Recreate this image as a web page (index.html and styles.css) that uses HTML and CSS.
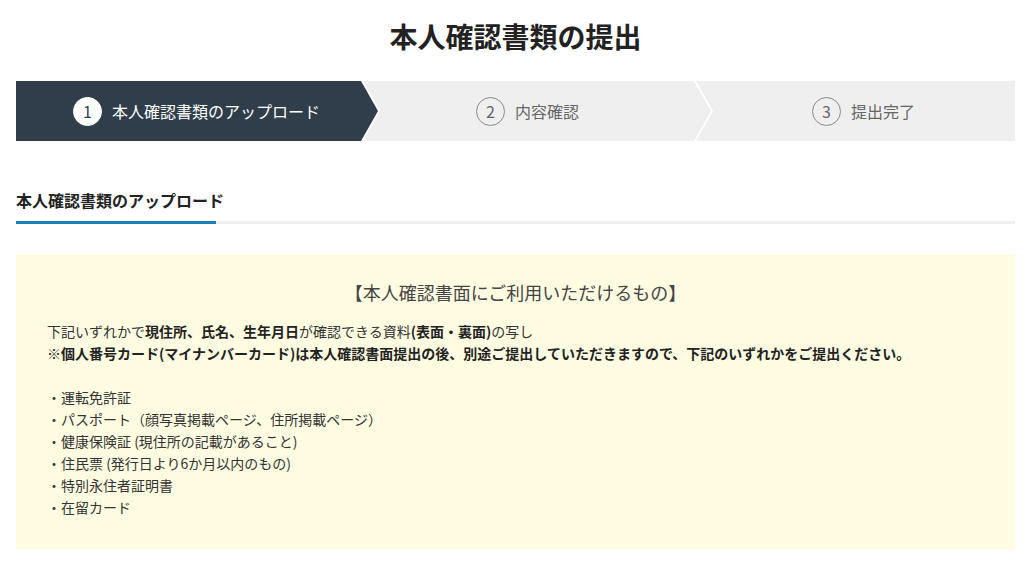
FILE: index.html
```html
<!DOCTYPE html>
<html lang="ja">
<head>
  <meta charset="UTF-8" />
  <title>本人確認書類の提出</title>
  <link rel="stylesheet" href="styles.css">
</head>
<body>
  <div class="wrap">
    <h1 class="page-title">本人確認書類の提出</h1>

    <ol class="steps">
      <li class="step step-first is-active">
        <span class="step-num">1</span>
        <span class="step-label">本人確認書類のアップロード</span>
      </li>
      <li class="step step-mid">
        <span class="step-num">2</span>
        <span class="step-label">内容確認</span>
      </li>
      <li class="step step-last">
        <span class="step-num">3</span>
        <span class="step-label">提出完了</span>
      </li>
    </ol>

    <div class="tab-head">
      <h2 class="tab">本人確認書類のアップロード</h2>
    </div>

    <div class="notice">
      <p class="notice-title">【本人確認書面にご利用いただけるもの】</p>
      <p>下記いずれかで<b>現住所、氏名、生年月日</b>が確認できる資料<b>(表面・裏面)</b>の写し<br>
      <b>※個人番号カード(マイナンバーカード)は本人確認書面提出の後、別途ご提出していただきますので、下記のいずれかをご提出ください。</b></p>
      <ul class="doc-list">
        <li>・運転免許証</li>
        <li>・パスポート（顔写真掲載ページ、住所掲載ページ）</li>
        <li>・健康保険証 (現住所の記載があること)</li>
        <li>・住民票 (発行日より6か月以内のもの)</li>
        <li>・特別永住者証明書</li>
        <li>・在留カード</li>
      </ul>
    </div>
  </div>
</body>
</html>
```

FILE: styles.css
```css
body {
  margin: 0;
  padding: 0 18px 0 16px;
  background: #fff;
  color: #333;
  font-family: "Noto Sans CJK JP", "Noto Sans", sans-serif;
}
.wrap {
  max-width: 999px;
}
.page-title {
  margin: 0;
  padding-top: 16px;
  font-size: 28px;
  line-height: 40px;
  font-weight: bold;
  text-align: center;
  color: #222;
}

/* ステップ */
.steps {
  list-style: none;
  margin: 25px 0 0;
  padding: 0;
  display: flex;
  height: 60px;
  background: #efefef;
}
.step {
  position: relative;
  display: flex;
  align-items: center;
  justify-content: center;
  gap: 10px;
  color: #666;
  font-size: 16px;
  background: #efefef;
}
.step-first {
  width: 345px;
  padding-left: 16px;
  box-sizing: border-box;
}
.step-mid {
  width: 333px;
}
.step-last {
  flex: 1;
  padding-left: 18px;
}
.step.is-active {
  background: #303e4b;
  color: #fff;
}
.step-first::before,
.step-mid::before {
  content: "";
  position: absolute;
  top: 0;
  right: -19px;
  width: 19px;
  height: 100%;
  background: #fff;
  clip-path: polygon(0 0, 2px 0, 19px 50%, 2px 100%, 0 100%);
  z-index: 1;
}
.step-first::after,
.step-mid::after {
  content: "";
  position: absolute;
  top: 0;
  right: -17px;
  width: 17px;
  height: 100%;
  background: inherit;
  clip-path: polygon(0 0, 100% 50%, 0 100%);
  z-index: 2;
}
.step-num {
  width: 29px;
  height: 29px;
  box-sizing: border-box;
  border: 1px solid #888;
  border-radius: 50%;
  display: flex;
  align-items: center;
  justify-content: center;
  font-size: 16px;
  color: #666;
}
.is-active .step-num {
  background: #fff;
  border-color: #fff;
  color: #303e4b;
}

/* タブ見出し */
.tab-head {
  margin-top: 47px;
  border-bottom: 3px solid #eee;
}
.tab {
  width: 200px;
  margin: 0 0 -3px;
  padding-bottom: 9px;
  border-bottom: 3px solid #1b7dbd;
  font-size: 16px;
  line-height: 24px;
  font-weight: bold;
  white-space: nowrap;
  color: #222;
}

/* 注意ボックス */
.notice {
  margin-top: 30px;
  padding: 24px 31px 31px;
  background: #fffce1;
  font-size: 14px;
  line-height: 22px;
}
.notice p {
  margin: 0;
}
.notice b {
  color: #222;
}
.notice .notice-title {
  font-size: 18px;
  line-height: 28px;
  text-align: center;
  margin-bottom: 14px;
  color: #444;
}
.doc-list {
  list-style: none;
  margin: 22px 0 0;
  padding: 0;
}
```
